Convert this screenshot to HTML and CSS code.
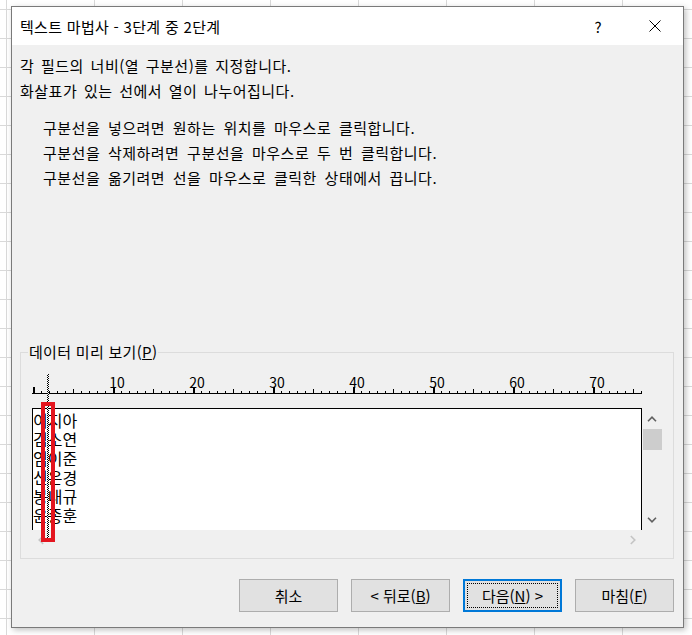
FILE: index.html
```html
<!DOCTYPE html>
<html lang="ko">
<head>
    <meta charset="UTF-8">
    <title>텍스트 마법사 - 3단계 중 2단계</title>
    <link rel="stylesheet" href="styles.css">
</head>
<body>
    <div class="dialog">
        <!-- 제목 표시줄 -->
        <div class="titlebar">
            <span class="title">텍스트 마법사 - 3단계 중 2단계</span>
            <span class="help">?</span>
            <span class="close">
                <svg viewBox="0 0 12 12" width="12" height="12">
                    <path d="M0.5 0.5L11.5 11.5M11.5 0.5L0.5 11.5" stroke="#000" stroke-width="1" fill="none"></path>
                </svg>
            </span>
        </div>

        <div class="content">
            <p class="desc">각 필드의 너비(열 구분선)를 지정합니다.<br>화살표가 있는 선에서 열이 나누어집니다.</p>
            <ul class="hints">
                <li>구분선을 넣으려면 원하는 위치를 마우스로 클릭합니다.</li>
                <li>구분선을 삭제하려면 구분선을 마우스로 두 번 클릭합니다.</li>
                <li>구분선을 옮기려면 선을 마우스로 클릭한 상태에서 끕니다.</li>
            </ul>

            <!-- 데이터 미리 보기 -->
            <fieldset class="group">
                <legend>데이터 미리 보기(<u>P</u>)</legend>
                <div class="preview">
                    <div class="ruler-nums">
                        <span>10</span><span>20</span><span>30</span><span>40</span><span>50</span><span>60</span><span>70</span>
                    </div>
                    <div class="ruler-ticks"></div>
                    <div class="data-area">
                        <div class="data">
                            <div>이지아</div>
                            <div>김소연</div>
                            <div>임이준</div>
                            <div>신은경</div>
                            <div>봉내규</div>
                            <div>윤종훈</div>
                        </div>
                        <div class="vscroll">
                            <span class="sb-btn">
                                <svg viewBox="0 0 10 6" width="10" height="6"><path d="M1 5.2L5 1.2L9 5.2" class="chev"></path></svg>
                            </span>
                            <span class="thumb"></span>
                            <span class="sb-fill"></span>
                            <span class="sb-btn">
                                <svg viewBox="0 0 10 6" width="10" height="6"><path d="M1 0.8L5 4.8L9 0.8" class="chev"></path></svg>
                            </span>
                        </div>
                    </div>
                    <div class="hscroll">
                        <span class="sb-btn">
                            <svg viewBox="0 0 6 10" width="6" height="10"><path d="M5.2 1L1.2 5L5.2 9" class="chev off"></path></svg>
                        </span>
                        <span class="sb-btn">
                            <svg viewBox="0 0 6 10" width="6" height="10"><path d="M0.8 1L4.8 5L0.8 9" class="chev off"></path></svg>
                        </span>
                    </div>
                    <div class="break-line"></div>
                    <div class="mark"></div>
                </div>
            </fieldset>

            <div class="buttons">
                <button class="btn">취소</button>
                <button class="btn">&lt; 뒤로(<u>B</u>)</button>
                <button class="btn focused">다음(<u>N</u>) &gt;</button>
                <button class="btn">마침(<u>F</u>)</button>
            </div>
        </div>
    </div>
</body>
</html>
```

FILE: styles.css
```css
* {
    box-sizing: border-box;
}

body {
    margin: 0;
    width: 692px;
    height: 635px;
    overflow: hidden;
    background-color: #fff;
    background-image:
        linear-gradient(90deg, #d9d9d9 1px, transparent 1px),
        linear-gradient(#d9d9d9 1px, transparent 1px);
    background-size: 88px 100%, 100% 29px;
    background-position: 6px 0, 0 9px;
    font-family: "Noto Sans CJK KR", "Noto Sans", sans-serif;
    font-size: 15px;
    color: #000;
}

.dialog {
    margin: 6px 0 0 11px;
    width: 673px;
    height: 622px;
    border: 1px solid #7a7a7a;
    background: #f0f0f0;
    box-shadow: 2px 2px 6px rgba(0, 0, 0, 0.25);
    display: flex;
    flex-direction: column;
}

.titlebar {
    height: 38px;
    flex: none;
    background: #fff;
    display: flex;
    align-items: center;
}

.title {
    flex: 1;
    padding-left: 8px;
    letter-spacing: 0.3px;
}

.help {
    width: 58px;
    text-align: center;
}

.close {
    width: 56px;
    display: flex;
    justify-content: center;
}

.content {
    padding: 8px 9px 0 8px;
}

.desc {
    margin: 0;
    line-height: 25px;
    letter-spacing: 0.5px;
    word-spacing: 2px;
}

.hints {
    margin: 12px 0 0;
    padding-left: 23px;
    list-style: none;
    line-height: 25px;
    letter-spacing: 0.5px;
    word-spacing: 3px;
}

.group {
    margin: 152px 0 0;
    padding: 0 0 8px 0;
    border: 1px solid #dcdcdc;
    min-width: 0;
}

.group legend {
    margin-left: 7px;
    padding: 0 1px;
    line-height: 20px;
    letter-spacing: 0.3px;
}

.preview {
    position: relative;
    margin: 12px 0 0 11px;
    width: 630px;
}

.ruler-nums {
    display: flex;
    margin-top: 2px;
    padding-left: 45px;
    height: 16px;
    line-height: 16px;
    font-size: 14px;
}

.ruler-nums span {
    width: 80px;
    text-align: center;
}

.ruler-ticks {
    width: 610px;
    height: 7px;
    margin-top: -3px;
    background-image:
        linear-gradient(#000, #000),
        repeating-linear-gradient(90deg, #000 0 1px, transparent 1px 8px),
        repeating-linear-gradient(90deg, #000 0 1px, transparent 1px 40px),
        repeating-linear-gradient(90deg, #000 0 2px, transparent 2px 80px);
    background-size: 100% 1px, 100% 3px, 100% 5px, 100% 7px;
    background-position: 0 100%, 1px 100%, 1px 100%, 1px 100%;
    background-repeat: no-repeat;
}

.data-area {
    display: flex;
    height: 122px;
    margin-top: 14px;
}

.data {
    width: 610px;
    padding-top: 2px;
    background: #fff;
    border: 1px solid #000;
    border-bottom: 0;
    font-size: 16px;
    line-height: 19px;
}

.vscroll {
    width: 20px;
    display: flex;
    flex-direction: column;
}

.sb-btn {
    width: 20px;
    height: 21px;
    display: flex;
    align-items: center;
    justify-content: center;
}

.thumb {
    height: 21px;
    margin-left: 1px;
    background: #cdcdcd;
}

.sb-fill {
    flex: 1;
}

.chev {
    fill: none;
    stroke: #606060;
    stroke-width: 1.6;
}

.chev.off {
    stroke: #c4c4c4;
}

.hscroll {
    width: 610px;
    height: 20px;
    display: flex;
    justify-content: space-between;
}

.hscroll .sb-btn {
    width: 18px;
    height: 20px;
}

.break-line {
    position: absolute;
    left: 15px;
    top: 0;
    width: 2px;
    height: 164px;
    background: repeating-conic-gradient(#000 0 25%, #fff 0 50%) 0 0 / 2px 2px;
}

.mark {
    position: absolute;
    left: 9px;
    top: 28px;
    width: 14px;
    height: 140px;
    border: 4px solid #e4151f;
}

.buttons {
    display: flex;
    justify-content: flex-end;
    gap: 13px;
    margin-top: 20px;
}

.btn {
    width: 99px;
    height: 33px;
    padding: 0;
    background: #e1e1e1;
    border: 1px solid #adadad;
    font-family: inherit;
    font-size: 15px;
    color: #000;
}

.btn.focused {
    border: 2px solid #0078d7;
    outline: 1px dotted #000;
    outline-offset: -5px;
}
```
